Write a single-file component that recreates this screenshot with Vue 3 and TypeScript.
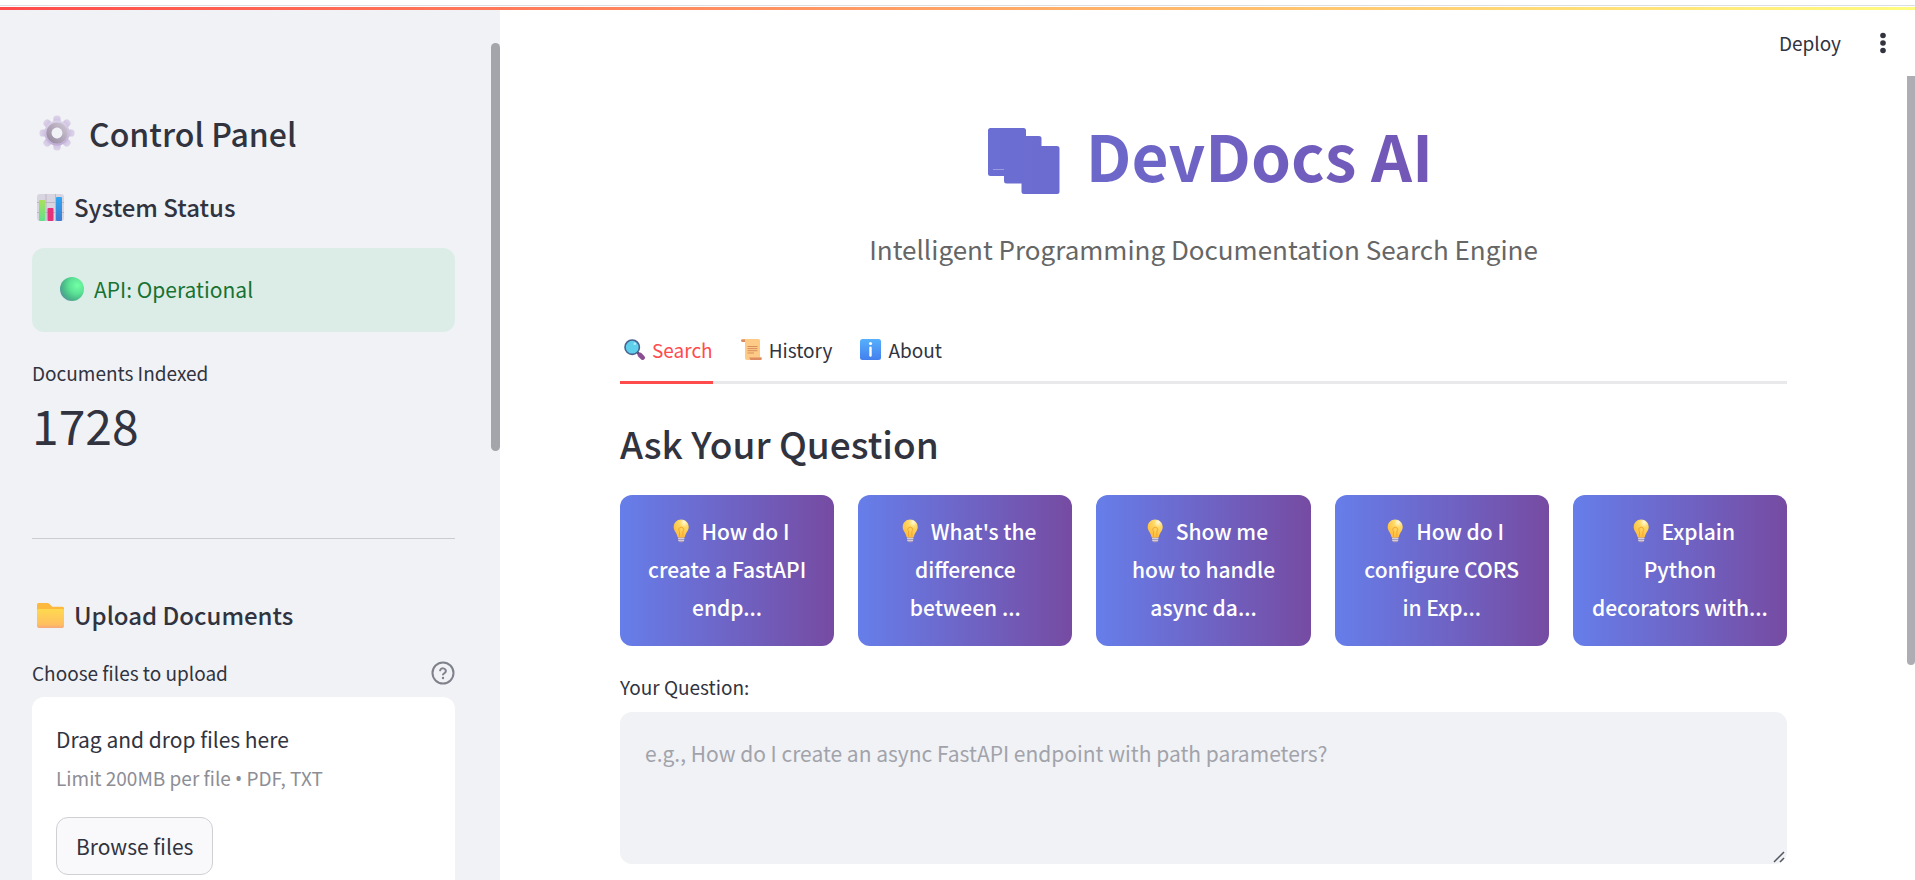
<script setup lang="ts">
import { ref } from 'vue'

type TabId = 'search' | 'history' | 'about'

interface Tab {
  id: TabId
  label: string
}

const tabs: Tab[] = [
  { id: 'search', label: 'Search' },
  { id: 'history', label: 'History' },
  { id: 'about', label: 'About' },
]

const activeTab = ref<TabId>('search')
const question = ref('')
const documentsIndexed = 1728

const examples: string[][] = [
  ['How do I', 'create a FastAPI', 'endp...'],
  ["What's the", 'difference', 'between ...'],
  ['Show me', 'how to handle', 'async da...'],
  ['How do I', 'configure CORS', 'in Exp...'],
  ['Explain', 'Python', 'decorators with...'],
]

const gearAngles = [0, 45, 90, 135, 180, 225, 270, 315]
</script>

<template>
  <div class="page">
    <div class="top-line"></div>
    <div class="decoration"></div>
    <div class="shell">
      <aside class="sidebar">
        <h2 class="panel-title">
          <svg class="gear" viewBox="0 0 36 36" aria-hidden="true">
            <defs>
              <linearGradient id="gearBody" x1="0" y1="0" x2="0" y2="1">
                <stop offset="0" stop-color="#ddd5ea" />
                <stop offset="1" stop-color="#bfacd6" />
              </linearGradient>
              <linearGradient id="gearRing" x1="1" y1="0" x2="0" y2="1">
                <stop offset="0" stop-color="#c9c1d0" />
                <stop offset="1" stop-color="#998da3" />
              </linearGradient>
            </defs>
            <g fill="url(#gearBody)">
              <rect
                v-for="angle in gearAngles"
                :key="angle"
                x="14.4"
                y="0.5"
                width="7.2"
                height="12"
                rx="3.2"
                :transform="`rotate(${angle} 18 18)`"
              />
              <circle cx="18" cy="18" r="12.6" />
            </g>
            <circle cx="18" cy="18" r="8" fill="none" stroke="url(#gearRing)" stroke-width="5.2" />
            <circle cx="18" cy="18" r="5.4" fill="#f0f2f6" />
          </svg>
          Control Panel
        </h2>

        <h3 class="section-title">
          <svg class="section-icon" viewBox="0 0 27 27" aria-hidden="true">
            <rect width="27" height="27" rx="3" fill="#d9d5e0" />
            <path d="M0 8.500H27M0 18.500H27M9 0V27M18.500 0V27" stroke="#bdb6c6" stroke-width="1" />
            <defs>
              <linearGradient id="barGreen" x1="0" y1="0" x2="0" y2="1">
                <stop offset="0" stop-color="#a9e05a" />
                <stop offset="1" stop-color="#62e08c" />
              </linearGradient>
              <linearGradient id="barBlue" x1="0" y1="0" x2="0" y2="1">
                <stop offset="0" stop-color="#2ea7f2" />
                <stop offset="1" stop-color="#3f7bd2" />
              </linearGradient>
            </defs>
            <rect x="2" y="6" width="6" height="21" rx="1" fill="url(#barGreen)" />
            <rect x="10.500" y="14" width="6" height="13" rx="1" fill="#e4317a" />
            <rect x="19" y="3" width="6" height="24" rx="1" fill="url(#barBlue)" />
          </svg>
          System Status
        </h3>

        <div class="status" role="status">
          <svg class="status-dot" viewBox="0 0 24 24" aria-hidden="true">
            <defs>
              <radialGradient id="orb" cx="0.72" cy="0.35" r="0.75">
                <stop offset="0" stop-color="#72ffa4" />
                <stop offset="0.45" stop-color="#5ce396" />
                <stop offset="0.8" stop-color="#49b987" />
                <stop offset="1" stop-color="#559a98" />
              </radialGradient>
            </defs>
            <circle cx="12" cy="12" r="12" fill="url(#orb)" />
          </svg>
          <span>API: Operational</span>
        </div>

        <div class="metric">
          <div class="metric-label">Documents Indexed</div>
          <div class="metric-value">{{ documentsIndexed }}</div>
        </div>

        <hr class="divider" />

        <h3 class="section-title">
          <svg class="section-icon" viewBox="0 0 27 27" aria-hidden="true">
            <defs>
              <linearGradient id="folderFront" x1="0" y1="0" x2="0" y2="1">
                <stop offset="0" stop-color="#ffd94f" />
                <stop offset="0.8" stop-color="#ffc060" />
                <stop offset="1" stop-color="#f7a878" />
              </linearGradient>
            </defs>
            <path d="M1.500 1H10.500Q11.500 1 12.300 1.800L15.300 4.800H25.500Q27 4.800 27 6.300V20H0V2.500Q0 1 1.500 1Z" fill="#fcb93e" />
            <path d="M0 8.500Q0 7 1.500 7H25.500Q27 7 27 8.500V24Q27 26 25 26H2Q0 26 0 24Z" fill="url(#folderFront)" />
          </svg>
          Upload Documents
        </h3>

        <div class="upload-label">
          <label for="upload-files">Choose files to upload</label>
          <button class="help" type="button" aria-label="Help">
            <svg viewBox="0 0 24 24" fill="none" stroke="#7f818b" stroke-width="2" stroke-linecap="round" stroke-linejoin="round" aria-hidden="true">
              <circle cx="12" cy="12" r="10.500" />
              <path d="M9.100 9.300a3 3 0 0 1 5.800 .8c0 2-2.900 2.500-2.900 3.500" />
              <path d="M12 17h.01" stroke-width="2.400" />
            </svg>
          </button>
        </div>
        <div class="dropzone">
          <div class="drop-title">Drag and drop files here</div>
          <div class="drop-limit">Limit 200MB per file <span class="dot">•</span> PDF, TXT</div>
          <button id="upload-files" class="browse" type="button">Browse files</button>
        </div>
        <div class="side-scroll"></div>
      </aside>

      <main class="main">
        <header class="toolbar">
          <button class="deploy" type="button">Deploy</button>
          <button class="more" type="button" aria-label="Menu">
            <svg viewBox="0 0 24 24" fill="#31333f" aria-hidden="true">
              <circle cx="12" cy="4.500" r="2.800" />
              <circle cx="12" cy="12" r="2.800" />
              <circle cx="12" cy="19.500" r="2.800" />
            </svg>
          </button>
        </header>

        <div class="content">
          <h1 class="title">
            <svg class="books" viewBox="0 0 72 66" aria-hidden="true">
              <defs>
                <linearGradient id="booksFill" gradientUnits="userSpaceOnUse" x1="0" y1="0" x2="72" y2="0">
                  <stop offset="0" stop-color="#6b6ed3" />
                  <stop offset="1" stop-color="#6c6bcf" />
                </linearGradient>
              </defs>
              <g fill="url(#booksFill)">
                <rect width="38" height="48" rx="2.500" />
                <rect x="16" y="8" width="37.500" height="47.500" rx="2.500" />
                <rect x="33.500" y="18" width="38" height="48" rx="2.500" />
              </g>
              <path d="M5 41.500H16" stroke="#9a9be0" stroke-width="1" />
            </svg>
            <span>DevDocs AI</span>
          </h1>
          <p class="subtitle">Intelligent Programming Documentation Search Engine</p>

          <div class="tabs" role="tablist">
            <button
              v-for="tab in tabs"
              :key="tab.id"
              class="tab"
              :class="{ active: tab.id === activeTab }"
              type="button"
              role="tab"
              :aria-selected="tab.id === activeTab"
              @click="activeTab = tab.id"
            >
              <svg v-if="tab.id === 'search'" class="tab-icon" viewBox="0 0 21 21" aria-hidden="true">
                <path d="M13.500 13.500L16 16" stroke="#5f4a78" stroke-width="2.500" />
                <path d="M16 16L18.600 18.600" stroke="#8a4f93" stroke-width="4.600" stroke-linecap="round" />
                <circle cx="8.200" cy="8.200" r="7.200" fill="#5fd0ec" stroke="#48618f" stroke-width="1.600" />
                <circle cx="10.800" cy="4.700" r="1.300" fill="#b4ecfa" />
              </svg>
              <svg v-else-if="tab.id === 'history'" class="tab-icon" viewBox="0 0 21 21" aria-hidden="true">
                <path d="M2 0H17.500Q19 0 19 1.500V19H4V3H2Q0 3 0 1.500T2 0Z" fill="#fdcb85" />
                <path d="M0 1.600Q0 .5 1.500 .5H4V3H1.800Q0 3 0 1.600Z" fill="#d98a62" />
                <path d="M4 18H19.500Q21 18 21 19.500T19.500 21H6Q4 21 4 19Z" fill="#fdcb85" />
                <path d="M8 18.500H19.500Q21 18.500 20.800 19.600T19.500 21H9.500Q9 19.500 8 18.500Z" fill="#dd8b63" />
                <path d="M6.500 7.500H16.500M6.500 9.600H16.500M6.500 11.700H16.500M6.500 14H13" stroke="#d88d5d" stroke-width="1" />
              </svg>
              <svg v-else class="tab-icon" viewBox="0 0 21 21" aria-hidden="true">
                <defs>
                  <linearGradient id="infoFill" x1="0" y1="0" x2="0" y2="1">
                    <stop offset="0" stop-color="#56b0fb" />
                    <stop offset="1" stop-color="#437fee" />
                  </linearGradient>
                </defs>
                <rect width="21" height="21" rx="2.500" fill="url(#infoFill)" />
                <circle cx="10.500" cy="4.500" r="1.600" fill="#fff" />
                <path d="M10.500 8.700V16.500" stroke="#fff" stroke-width="2.400" stroke-linecap="round" />
              </svg>
              {{ tab.label }}
            </button>
          </div>

          <h2 class="ask">Ask Your Question</h2>

          <div class="cards">
            <button
              v-for="(lines, index) in examples"
              :key="index"
              class="card"
              type="button"
              @click="question = lines.join(' ')"
            >
              <span v-for="(line, row) in lines" :key="row" class="card-line">
                <svg v-if="row === 0" class="bulb" viewBox="0 0 32 24" aria-hidden="true">
                  <defs>
                    <radialGradient :id="`bulb${index}`" cx="0.7" cy="0.15" r="0.8">
                      <stop offset="0" stop-color="#fffbe0" />
                      <stop offset="0.35" stop-color="#ffdb68" />
                      <stop offset="1" stop-color="#ffbe3f" />
                    </radialGradient>
                  </defs>
                  <rect x="13.200" y="17.500" width="6" height="5.800" rx="1.800" fill="#a99bb4" />
                  <path d="M13 19.500H19.400M13.300 21.500H19.100" stroke="#e1d9e8" stroke-width="0.800" />
                  <path d="M16.200 .5C20.500 .5 23.700 3.700 23.700 8C23.700 12 20.700 13.500 20 17.500Q19.900 18.400 19 18.400H13.400Q12.500 18.400 12.400 17.500C11.700 13.500 8.700 12 8.700 8C8.700 3.700 11.900 .5 16.200 .5Z" :fill="`url(#bulb${index})`" />
                  <path d="M14.500 17.500V12.500Q13 10.500 14.200 9Q16.200 7.300 18.200 9Q19.400 10.500 17.900 12.500V17.500" fill="none" stroke="#f4a22c" stroke-width="0.900" />
                </svg>
                {{ line }}
              </span>
            </button>
          </div>

          <label class="question-label" for="question">Your Question:</label>
          <div class="question-box">
            <textarea
              id="question"
              v-model="question"
              class="question"
              placeholder="e.g., How do I create an async FastAPI endpoint with path parameters?"
            ></textarea>
            <svg class="grip" viewBox="0 0 12 12" aria-hidden="true">
              <path d="M1 11L11 1M7 11L11 7" stroke="#52545e" stroke-width="1.500" />
            </svg>
          </div>
        </div>
        <div class="main-scroll"></div>
      </main>
    </div>
  </div>
</template>

<style>
body {
  overflow: hidden;
  background: #ffffff;
}
</style>

<style scoped>
.page {
  display: flex;
  flex-direction: column;
  height: 100vh;
  box-sizing: border-box;
  padding-top: 5px;
  overflow: hidden;
  color: #31333f;
  font-family: "Noto Sans CJK SC", "Noto Sans", sans-serif;
  font-size: 21px;
  line-height: 34px;
}

.page * {
  box-sizing: border-box;
}

button,
textarea {
  font: inherit;
  color: inherit;
}

button {
  border: 0;
  padding: 0;
  background: none;
  cursor: pointer;
}

h1,
h2,
h3,
p {
  margin: 0;
}

svg {
  flex: none;
}

.top-line {
  flex: none;
  height: 1px;
  margin-bottom: 1px;
  background: #dcdde1;
}

.decoration {
  flex: none;
  height: 3px;
  background: linear-gradient(90deg, #ff4b4b, #fffd80);
}

.shell {
  display: flex;
  flex: 1;
  min-height: 0;
}

.sidebar {
  position: relative;
  flex: none;
  width: 500px;
  padding: 101px 45px 0 32px;
  overflow: hidden;
  background: #f0f2f6;
}

.panel-title {
  display: flex;
  align-items: center;
  gap: 14px;
  margin-bottom: 34px;
  padding-left: 7px;
  font-size: 32px;
  font-weight: 500;
  line-height: 44px;
}

.gear {
  width: 36px;
  height: 36px;
}

.section-title {
  display: flex;
  align-items: center;
  gap: 10px;
  padding-left: 5px;
  font-size: 24px;
  font-weight: 500;
  line-height: 36px;
}

.section-icon {
  width: 27px;
  height: 27px;
}

.status {
  display: flex;
  align-items: center;
  gap: 10px;
  height: 84px;
  margin: 23px 0 25px;
  padding: 0 28px 2px;
  border-radius: 12px;
  background: #dcede7;
  color: #177233;
}

.status-dot {
  width: 24px;
  height: 24px;
}

.metric-label {
  font-size: 19px;
  line-height: 32px;
}

.metric-value {
  margin-top: 3px;
  font-size: 48px;
  line-height: 64px;
}

.divider {
  height: 1px;
  margin: 82px 0 58px;
  border: 0;
  background: #cbccd2;
}

.upload-label {
  display: flex;
  align-items: center;
  justify-content: space-between;
  margin: 24px 0 8px;
  font-size: 19px;
  line-height: 32px;
}

.help,
.help svg {
  display: block;
  width: 24px;
  height: 24px;
}

.dropzone {
  padding: 24px;
  border-radius: 12px 12px 0 0;
  background: #ffffff;
}

.drop-title {
  line-height: 36px;
}

.drop-limit {
  margin-top: 5px;
  font-size: 19px;
  line-height: 32px;
  color: #8d8e95;
}

.dot {
  font-family: "Noto Sans", sans-serif;
}

.browse {
  height: 58px;
  margin: 22px 0 24px;
  padding: 0 19px;
  border: 1px solid #cfd0d4;
  border-radius: 12px;
  background: #f9f9fb;
}

.side-scroll {
  position: absolute;
  top: 33px;
  right: 0;
  width: 9px;
  height: 408px;
  border-radius: 5px;
  background: #a4a5ab;
}

.main {
  position: relative;
  flex: 1;
  min-width: 0;
}

.toolbar {
  display: flex;
  align-items: center;
  justify-content: flex-end;
  gap: 30px;
  height: 66px;
  padding-right: 20px;
  font-size: 19px;
  line-height: 32px;
}

.more,
.more svg {
  display: block;
  width: 24px;
  height: 24px;
}

.content {
  padding: 34px 128px 0 120px;
}

.title {
  display: flex;
  align-items: center;
  justify-content: center;
  gap: 26px;
  padding-left: 14px;
  font-size: 64px;
  font-weight: 700;
  line-height: 88px;
}

.books {
  width: 72px;
  height: 66px;
  margin-top: 14px;
}

.title span {
  background: linear-gradient(90deg, #6c69cb, #7356b5);
  background-clip: text;
  color: transparent;
}

.subtitle {
  margin-top: 31px;
  font-size: 26px;
  line-height: 40px;
  text-align: center;
  color: #666666;
}

.tabs {
  display: flex;
  gap: 24px;
  margin-top: 49px;
  border-bottom: 3px solid #e9e9eb;
}

.tab {
  display: flex;
  align-items: center;
  gap: 7px;
  height: 66px;
  margin-bottom: -3px;
  padding-left: 4px;
  border-bottom: 3px solid transparent;
  font-size: 19px;
}

.tab.active {
  border-color: #ff4b4b;
  color: #ff4b4b;
}

.tab-icon {
  width: 21px;
  height: 21px;
}

.ask {
  margin: 32px 0 24px;
  font-size: 37px;
  font-weight: 500;
  line-height: 55px;
}

.cards {
  display: grid;
  grid-template-columns: repeat(5, 1fr);
  gap: 24px;
}

.card {
  padding: 17px 0 20px;
  border-radius: 12px;
  background: linear-gradient(90deg, #667eea, #764ba2);
  font-weight: 500;
  line-height: 38px;
  color: #ffffff;
}

.card-line {
  display: block;
  white-space: nowrap;
}

.bulb {
  width: 32px;
  height: 24px;
  vertical-align: -3px;
}

.question-label {
  display: block;
  margin: 25px 0 9px;
  font-size: 19px;
  line-height: 32px;
}

.question-box {
  position: relative;
}

.question {
  display: block;
  width: 100%;
  height: 152px;
  padding: 24px 25px;
  border: 0;
  border-radius: 12px;
  outline: none;
  background: #f0f2f6;
  resize: none;
}

.question::placeholder {
  color: #a2a3aa;
  opacity: 1;
}

.grip {
  position: absolute;
  right: 2px;
  bottom: 1px;
  width: 12px;
  height: 12px;
}

.main-scroll {
  position: absolute;
  top: 66px;
  right: 0;
  width: 8px;
  height: 589px;
  border-radius: 0 0 4px 4px;
  background: #adadb3;
}
</style>
